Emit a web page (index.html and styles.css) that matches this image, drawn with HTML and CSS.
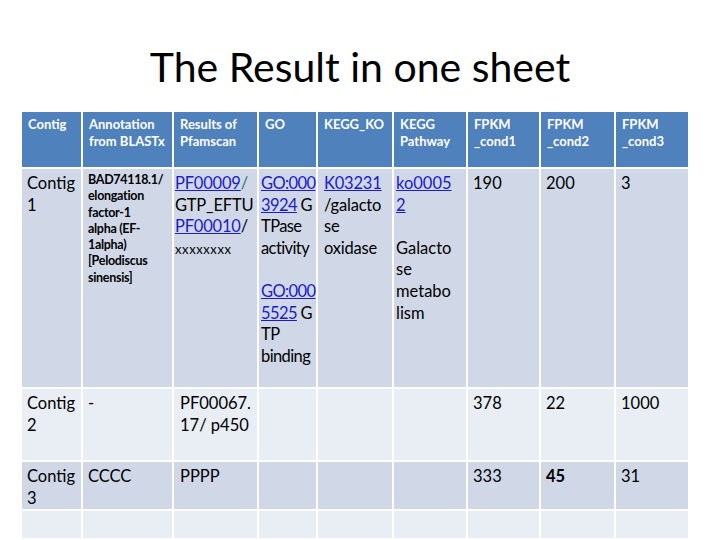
FILE: index.html
```html
<!DOCTYPE html>
<html>
<head>
<meta charset="utf-8">
<link rel="stylesheet" href="styles.css">
</head>
<body>
<div class="slide">
  <header class="title-wrap"><h1 class="title">The Result in one sheet</h1></header>
  <div class="sheet">
    <div class="c hd">Contig</div>
    <div class="c hd">Annotation<br>from BLASTx</div>
    <div class="c hd">Results of<br>Pfamscan</div>
    <div class="c hd">GO</div>
    <div class="c hd">KEGG_KO</div>
    <div class="c hd">KEGG<br>Pathway</div>
    <div class="c hd">FPKM<br>_cond1</div>
    <div class="c hd">FPKM<br>_cond2</div>
    <div class="c hd">FPKM<br>_cond3</div>

    <div class="c dk big p5">Contig<br>1</div>
    <div class="c dk small p5">BAD74118.1/<br>elongation<br>factor-1<br>alpha (EF-<br>1alpha)<br>[Pelodiscus<br>sinensis]</div>
    <div class="c dk big p1 tight"><span class="lnk">PF00009</span><span class="sl">/</span><br>GTP_EFTU<br><span class="lnk">PF00010</span>/<br><span class="xs">xxxxxxxx</span></div>
    <div class="c dk big p2 tighter"><span class="lnk">GO:000</span><br><span class="lnk">3924</span> G<br>TPase<br>activity<br>&nbsp;<br><span class="lnk">GO:000</span><br><span class="lnk">5525</span> G<br>TP<br>binding</div>
    <div class="c dk big p6 tight"><span class="lnk">K03231</span><br>/galacto<br>se<br>oxidase</div>
    <div class="c dk big p2"><span class="lnk">ko0005</span><br><span class="lnk">2</span><br>&nbsp;<br>Galacto<br>se<br>metabo<br>lism</div>
    <div class="c dk big p5">190</div>
    <div class="c dk big p5">200</div>
    <div class="c dk big p5">3</div>

    <div class="c lt big p5">Contig<br>2</div>
    <div class="c lt big p5">-</div>
    <div class="c lt big p6">PF00067.<br>17/ p450</div>
    <div class="c lt"></div>
    <div class="c lt"></div>
    <div class="c lt"></div>
    <div class="c lt big p5">378</div>
    <div class="c lt big p5">22</div>
    <div class="c lt big p5">1000</div>

    <div class="c dk big p5">Contig<br>3</div>
    <div class="c dk big p5">CCCC</div>
    <div class="c dk big p6">PPPP</div>
    <div class="c dk"></div>
    <div class="c dk"></div>
    <div class="c dk"></div>
    <div class="c dk big p5">333</div>
    <div class="c dk big p5"><b class="semi">45</b></div>
    <div class="c dk big p5">31</div>

    <div class="c lt"></div>
    <div class="c lt"></div>
    <div class="c lt"></div>
    <div class="c lt"></div>
    <div class="c lt"></div>
    <div class="c lt"></div>
    <div class="c lt"></div>
    <div class="c lt"></div>
    <div class="c lt"></div>
  </div>
</div>
</body>
</html>
```
FILE: styles.css
```css
html, body {
  margin: 0;
  padding: 0;
  background: #ffffff;
}
body {
  font-family: Lato, "Open Sans", "Liberation Sans", sans-serif;
  color: #000000;
}
.slide {
  width: 720px;
  height: 540px;
  overflow: hidden;
}
.title-wrap {
  height: 112px;
  box-sizing: border-box;
  padding-top: 46px;
}
.title {
  margin: 0;
  font-weight: 400;
  font-size: 41px;
  line-height: 41px;
  text-align: center;
  color: #000;
}
.sheet {
  margin-left: 22px;
  display: grid;
  grid-template-columns: 59px 89px 83px 57px 74px 72px 71px 73px 72px;
  grid-template-rows: 55px 218px 71px 47px 27px;
  gap: 2px;
}
.c {
  box-sizing: border-box;
  white-space: nowrap;
  overflow: hidden;
}
.hd {
  background: #4f81bd;
  color: #ffffff;
  font-weight: 700;
  font-size: 13px;
  line-height: 17px;
  padding: 4px 0 0 6px;
}
.dk { background: #d0d8e8; }
.lt { background: #e9edf4; }
.big {
  font-size: 16.5px;
  line-height: 21.6px;
  padding-top: 4px;
}
.small {
  font-size: 12.5px;
  font-weight: 700;
  line-height: 16.3px;
  letter-spacing: -0.3px;
  padding-top: 3px;
}
.tight { letter-spacing: -0.2px; }
.tighter { letter-spacing: -0.6px; }
.p1 { padding-left: 1px; }
.p2 { padding-left: 2px; }
.p5 { padding-left: 5px; }
.p6 { padding-left: 6px; }
.lnk {
  color: #1b1bc8;
  text-decoration: underline;
}
.sl { color: #2a7a70; }
.xs { font-size: 13px; letter-spacing: 0.6px; }
.semi { font-weight: 700; }
```
